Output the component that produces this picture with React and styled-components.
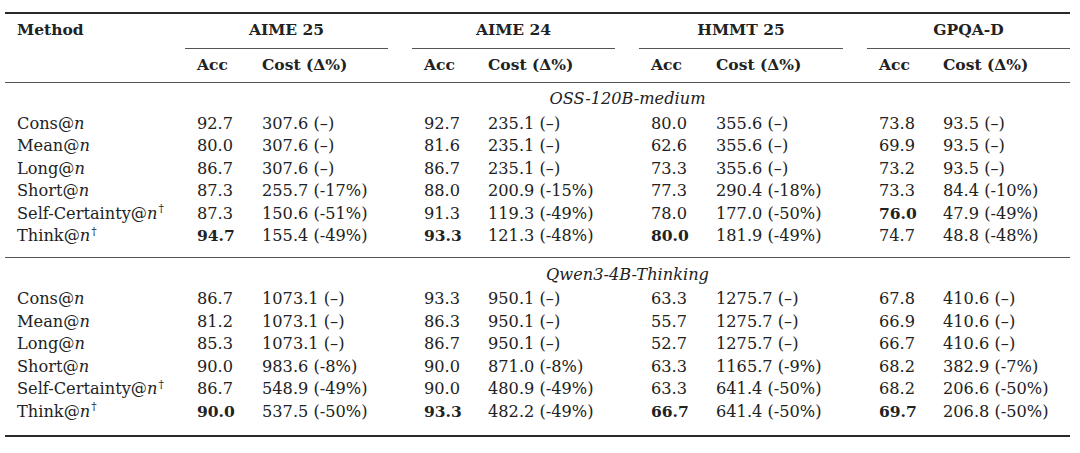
import styled, { createGlobalStyle } from 'styled-components';

const GlobalStyle = createGlobalStyle`
	html, body {
		margin: 0;
		background: #fff;
	}
	body {
		padding: 12px 0 0 5px;
	}
`;

const groups = ['AIME 25', 'AIME 24', 'HMMT 25', 'GPQA-D'];

// [acc, cost, boldAcc]
const sections = [
	{
		label: 'OSS-120B-medium',
		rows: [
			{ name: 'Cons', cells: [['92.7', '307.6 (–)'], ['92.7', '235.1 (–)'], ['80.0', '355.6 (–)'], ['73.8', '93.5 (–)']] },
			{ name: 'Mean', cells: [['80.0', '307.6 (–)'], ['81.6', '235.1 (–)'], ['62.6', '355.6 (–)'], ['69.9', '93.5 (–)']] },
			{ name: 'Long', cells: [['86.7', '307.6 (–)'], ['86.7', '235.1 (–)'], ['73.3', '355.6 (–)'], ['73.2', '93.5 (–)']] },
			{ name: 'Short', cells: [['87.3', '255.7 (-17%)'], ['88.0', '200.9 (-15%)'], ['77.3', '290.4 (-18%)'], ['73.3', '84.4 (-10%)']] },
			{ name: 'Self-Certainty', dagger: true, cells: [['87.3', '150.6 (-51%)'], ['91.3', '119.3 (-49%)'], ['78.0', '177.0 (-50%)'], ['76.0', '47.9 (-49%)', true]] },
			{ name: 'Think', dagger: true, cells: [['94.7', '155.4 (-49%)', true], ['93.3', '121.3 (-48%)', true], ['80.0', '181.9 (-49%)', true], ['74.7', '48.8 (-48%)']] },
		],
	},
	{
		label: 'Qwen3-4B-Thinking',
		rows: [
			{ name: 'Cons', cells: [['86.7', '1073.1 (–)'], ['93.3', '950.1 (–)'], ['63.3', '1275.7 (–)'], ['67.8', '410.6 (–)']] },
			{ name: 'Mean', cells: [['81.2', '1073.1 (–)'], ['86.3', '950.1 (–)'], ['55.7', '1275.7 (–)'], ['66.9', '410.6 (–)']] },
			{ name: 'Long', cells: [['85.3', '1073.1 (–)'], ['86.7', '950.1 (–)'], ['52.7', '1275.7 (–)'], ['66.7', '410.6 (–)']] },
			{ name: 'Short', cells: [['90.0', '983.6 (-8%)'], ['90.0', '871.0 (-8%)'], ['63.3', '1165.7 (-9%)'], ['68.2', '382.9 (-7%)']] },
			{ name: 'Self-Certainty', dagger: true, cells: [['86.7', '548.9 (-49%)'], ['90.0', '480.9 (-49%)'], ['63.3', '641.4 (-50%)'], ['68.2', '206.6 (-50%)']] },
			{ name: 'Think', dagger: true, cells: [['90.0', '537.5 (-50%)', true], ['93.3', '482.2 (-49%)', true], ['66.7', '641.4 (-50%)', true], ['69.7', '206.8 (-50%)', true]] },
		],
	},
];

const colWidths = [180, 65, 162, 64, 163, 65, 163, 64, 139];

const App = () => (
	<>
		<GlobalStyle />
		<Table>
			<colgroup>
				{colWidths.map((w, i) => (
					<Col key={i} $w={w} />
				))}
			</colgroup>
			<thead>
				<HeadRow>
					<HeadCell>Method</HeadCell>
					{groups.map((g, i) => (
						<GroupCell key={g} colSpan={2} $last={i === groups.length - 1}>
							<GroupTitle>{g}</GroupTitle>
						</GroupCell>
					))}
				</HeadRow>
				<SubHeadRow>
					<HeadCell />
					{groups.map((g) => [
						<HeadCell key={g + 'a'}>Acc</HeadCell>,
						<HeadCell key={g + 'c'}>Cost (Δ%)</HeadCell>,
					])}
				</SubHeadRow>
			</thead>
			{sections.map((s, si) => (
				<Section key={s.label} $last={si === sections.length - 1}>
					<LabelRow $first={si === 0}>
						<Cell />
						<LabelCell colSpan={8}>{s.label}</LabelCell>
					</LabelRow>
					{s.rows.map((r) => (
						<tr key={r.name}>
							<Cell>
								{r.name}@<Ital>n</Ital>
								{r.dagger && <Dagger>†</Dagger>}
							</Cell>
							{r.cells.map(([acc, cost, bold], ci) => [
								<Cell key={ci + 'a'} $bold={bold}>{acc}</Cell>,
								<Cell key={ci + 'c'}>{cost}</Cell>,
							])}
						</tr>
					))}
				</Section>
			))}
		</Table>
	</>
);

const Table = styled.table`
	border-collapse: collapse;
	table-layout: fixed;
	width: 1065px;
	border-top: 2px solid #2a2a2a;
	border-bottom: 2px solid #2a2a2a;
	font-family: 'DejaVu Serif', serif;
	font-size: 16.2px;
	line-height: 22.5px;
	color: #222;
`;

const Col = styled.col`
	width: ${(p) => p.$w}px;
`;

const HeadRow = styled.tr`
	& > th {
		padding-top: 5px;
	}
`;

const SubHeadRow = styled.tr`
	border-bottom: 1px solid #555;

	& > th {
		padding-top: 5px;
		padding-bottom: 6px;
	}
`;

const HeadCell = styled.th`
	padding: 0 0 0 12px;
	text-align: left;
	font-size: 15.5px;
	font-weight: bold;
	white-space: nowrap;
	vertical-align: top;
`;

const GroupCell = styled.th`
	padding: 5px ${(p) => (p.$last ? 0 : 24)}px 0 0;
	font-size: 15.5px;
	font-weight: bold;
	text-align: center;
	white-space: nowrap;
`;

const GroupTitle = styled.div`
	padding-bottom: 6px;
	border-bottom: 1px solid #555;
`;

const Section = styled.tbody`
	border-bottom: ${(p) => (p.$last ? 'none' : '1px solid #555')};

	& > tr:last-child > td {
		padding-bottom: ${(p) => (p.$last ? 12 : 9)}px;
	}
`;

const LabelRow = styled.tr`
	& > td {
		padding-top: ${(p) => (p.$first ? 5 : 6)}px;
		padding-bottom: 2px;
	}
`;

const LabelCell = styled.td`
	text-align: center;
	font-style: italic;
	white-space: nowrap;
`;

const Cell = styled.td`
	padding: 0 0 0 12px;
	white-space: nowrap;
	font-size: ${(p) => (p.$bold ? '15.5px' : 'inherit')};
	font-weight: ${(p) => (p.$bold ? 'bold' : 'normal')};
`;

const Ital = styled.i`
	font-style: italic;
`;

const Dagger = styled.sup`
	font-size: 0.68em;
	line-height: 0;
	vertical-align: 0.55em;
	margin-left: 1px;
`;

export default App;
